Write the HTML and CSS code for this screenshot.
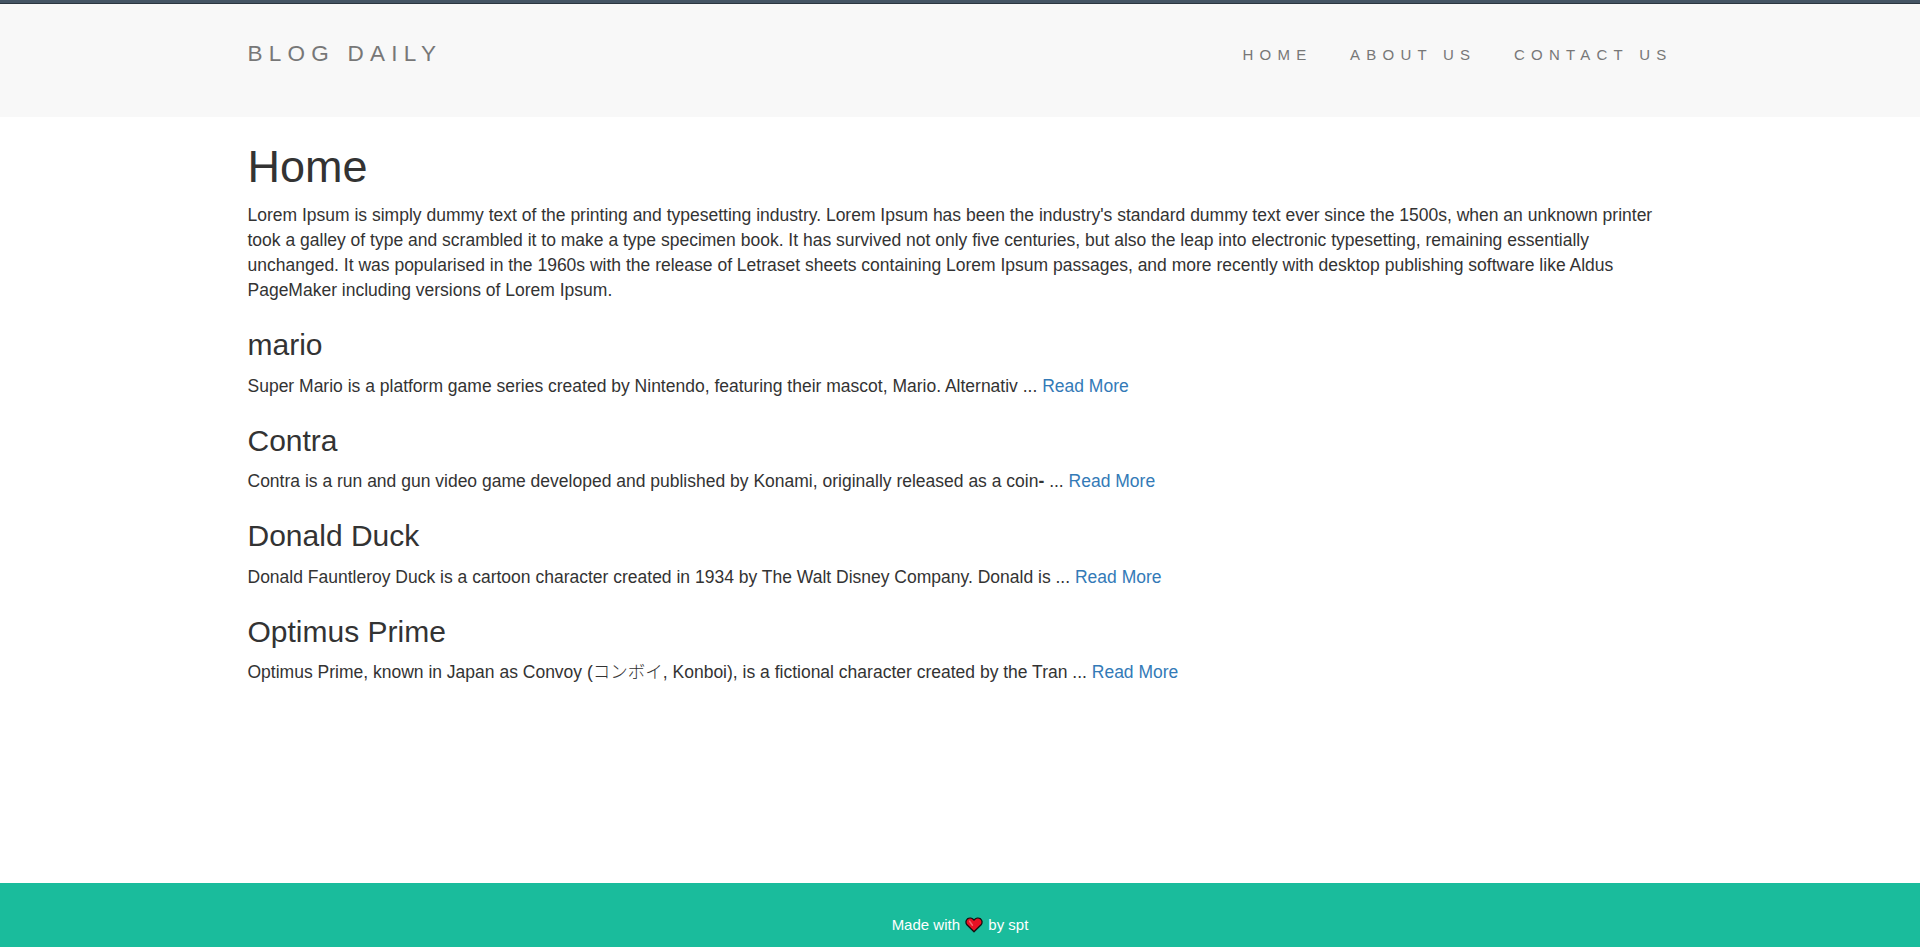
FILE: index.html
```html
<!DOCTYPE html>
<html lang="en">
<head>
    <meta charset="UTF-8">
    <title>Blog Daily</title>

    <link rel="stylesheet" href="styles.css">
</head>
<body>
<nav class="navbar">
    <div class="container navbar-inner">
        <a class="navbar-brand" href="#">BLOG DAILY</a>
        <ul class="navbar-nav">
            <li><a href="#">HOME</a></li>
            <li><a href="#">ABOUT US</a></li>
            <li><a href="#">CONTACT US</a></li>
        </ul>
    </div>
</nav>

<main class="container">
    <h1>Home</h1>
    <p>Lorem Ipsum is simply dummy text of the printing and typesetting industry. Lorem Ipsum has been the industry's standard dummy text ever since the 1500s, when an unknown printer took a galley of type and scrambled it to make a type specimen book. It has survived not only five centuries, but also the leap into electronic typesetting, remaining essentially unchanged. It was popularised in the 1960s with the release of Letraset sheets containing Lorem Ipsum passages, and more recently with desktop publishing software like Aldus PageMaker including versions of Lorem Ipsum.</p>

    <h3>mario</h3>
    <p>Super Mario is a platform game series created by Nintendo, featuring their mascot, Mario. Alternativ ... <a href="#">Read More</a></p>

    <h3>Contra</h3>
    <p>Contra is a run and gun video game developed and published by Konami, originally released as a coin<span class="dash">-</span> ... <a href="#">Read More</a></p>

    <h3>Donald Duck</h3>
    <p>Donald Fauntleroy Duck is a cartoon character created in 1934 by The Walt Disney Company. Donald is ... <a href="#">Read More</a></p>

    <h3>Optimus Prime</h3>
    <p>Optimus Prime, known in Japan as Convoy (<span class="kana" lang="ja">コンボイ</span>, Konboi), is a fictional character created by the Tran ... <a href="#">Read More</a></p>
</main>

<footer class="footer">
    <p>
        Made with
        <svg class="heart" viewBox="0 0 18 16" width="18" height="16">
            <path d="M9 14.8 L1.9 7.8 C0.4 6 0.7 3.2 2.4 1.9 C4.4 0.5 7.3 0.9 9 3.1 C10.7 0.9 13.6 0.5 15.6 1.9 C17.3 3.2 17.6 6 16.1 7.8 Z" fill="#e81224" stroke="#111" stroke-width="1.3" stroke-linejoin="round"/>
            <path d="M4.6 4.2 L7.4 8.2" stroke="#f4676e" stroke-width="1.5" stroke-linecap="round"/>
        </svg>
        by spt
    </p>
</footer>
</body>
</html>
```
FILE: styles.css
```css
* {
    box-sizing: border-box;
}

body {
    display: flex;
    flex-direction: column;
    min-height: 100vh;
    margin: 0;

    font-family: "Liberation Sans", Arial, sans-serif;
    font-size: 17.5px;
    line-height: 25px;
    color: #333;
    background: #fff;
}

a {
    color: #337ab7;
    text-decoration: none;
}

.container {
    width: 1462.5px;
    margin: 0 auto;
    padding: 0 18.75px;
}

.navbar {
    height: 117px;
    background: #f8f8f8;
    border-top: 3px solid #455564;
    box-shadow: inset 0 1px 0 #2b3640;
}

.navbar-inner {
    display: flex;
    justify-content: space-between;
    padding-top: 38px;
}

.navbar a {
    color: #777;
    letter-spacing: 6.25px;
}

.navbar-brand {
    font-size: 22.5px;
}

.navbar-nav {
    display: flex;
    gap: 37.5px;
    margin: 0;
    padding: 1px 0 0;
    list-style: none;
    font-size: 15px;
}

h1, h3 {
    font-weight: 500;
    line-height: 1.1;
    margin: 25px 0 12.5px;
}

h1 {
    font-size: 45px;
    margin-bottom: 11.5px;
}

h3 {
    font-size: 30px;
}

p {
    margin: 0 0 12.5px;
}

.kana {
    font-family: "Noto Sans CJK JP", sans-serif;
    font-weight: 300;
    line-height: 1;
}

.dash {
    font-weight: 700;
}

.footer {
    height: 64px;
    margin-top: auto;
    padding-top: 29px;
    text-align: center;
    font-size: 15px;
    color: #fff;
    background: #1abc9c;
}

.footer p {
    margin: 0;
}

.heart {
    margin: 0 1px;
    vertical-align: -3px;
}
```
